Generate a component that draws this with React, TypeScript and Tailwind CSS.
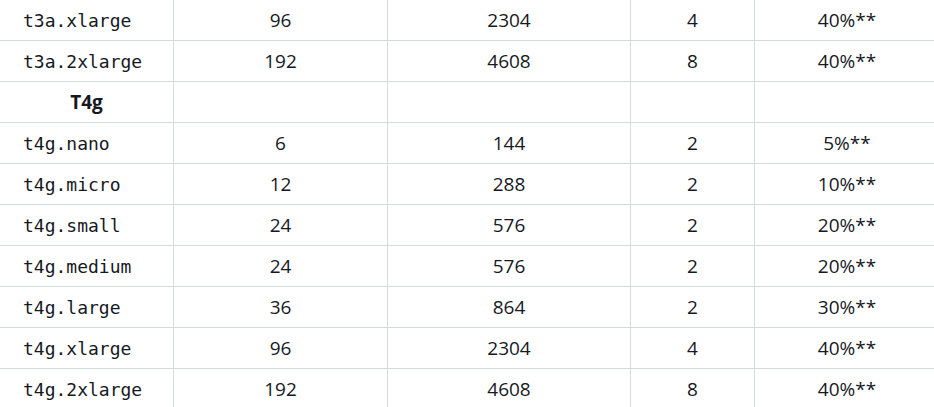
import React from 'react';

type Row = {
  name: string;
  credits?: string;
  max?: string;
  vcpu?: string;
  baseline?: string;
  group?: boolean;
};

const rows: Row[] = [
  { name: 't3a.xlarge', credits: '96', max: '2304', vcpu: '4', baseline: '40%**' },
  { name: 't3a.2xlarge', credits: '192', max: '4608', vcpu: '8', baseline: '40%**' },
  { name: 'T4g', group: true },
  { name: 't4g.nano', credits: '6', max: '144', vcpu: '2', baseline: '5%**' },
  { name: 't4g.micro', credits: '12', max: '288', vcpu: '2', baseline: '10%**' },
  { name: 't4g.small', credits: '24', max: '576', vcpu: '2', baseline: '20%**' },
  { name: 't4g.medium', credits: '24', max: '576', vcpu: '2', baseline: '20%**' },
  { name: 't4g.large', credits: '36', max: '864', vcpu: '2', baseline: '30%**' },
  { name: 't4g.xlarge', credits: '96', max: '2304', vcpu: '4', baseline: '40%**' },
  { name: 't4g.2xlarge', credits: '192', max: '4608', vcpu: '8', baseline: '40%**' },
];

const cell = 'h-[41px] border-b border-r border-[#d5dbdb] flex items-center justify-center';

export default function App() {
  return (
    <div className="w-full h-[407px] overflow-hidden bg-white text-[#16191f] font-['Open_Sans',sans-serif] text-[19px]">
      <div className="grid w-[939px] grid-cols-[174px_214px_243px_124px_1fr]">
        {rows.map((r) => (
          <React.Fragment key={r.name}>
            {r.group ? (
              <div className={`${cell} font-bold`}>{r.name}</div>
            ) : (
              <div className={`${cell} justify-start pl-[23px] font-['DejaVu_Sans_Mono',monospace] text-[18px]`}>
                {r.name}
              </div>
            )}
            <div className={cell}>{r.credits}</div>
            <div className={cell}>{r.max}</div>
            <div className={cell}>{r.vcpu}</div>
            <div className={`${cell} border-r-0`}>{r.baseline}</div>
          </React.Fragment>
        ))}
      </div>
    </div>
  );
}
